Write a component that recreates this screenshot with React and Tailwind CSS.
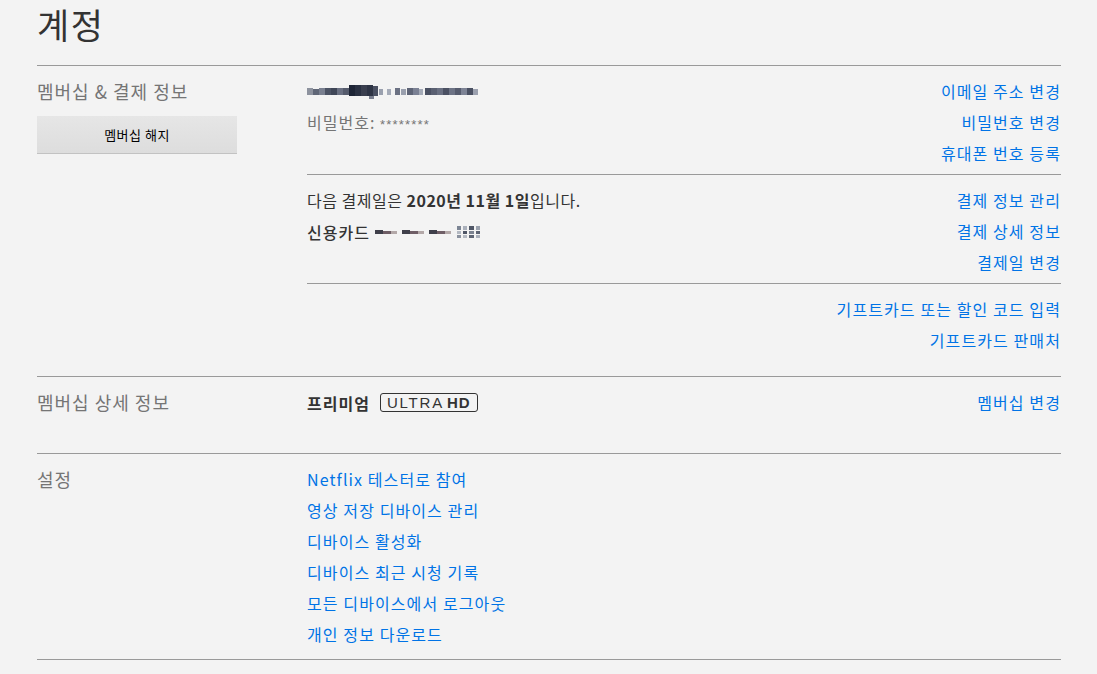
import React from "react";

const font = { fontFamily: "'Noto Sans CJK KR', 'Noto Sans', Arial, sans-serif" };

function Link({ children }) {
  return <div className="text-[16px] leading-[31px] text-[#0073e6] tracking-[1.1px]">{children}</div>;
}

function EmailBlur() {
  const blocks = [
    [0, 3, 6, 7, "#8d929e"], [6, 4, 6, 6, "#5f6676"], [12, 3, 6, 7, "#7a8090"], [18, 3, 6, 7, "#4c5364"],
    [24, 3, 6, 7, "#3f4657"], [30, 3, 6, 7, "#6a7082"], [36, 3, 6, 7, "#555b6c"], [42, 0, 6, 11, "#1e2536"],
    [48, 0, 6, 11, "#2a3142"], [54, 0, 6, 11, "#3a3f4f"], [60, 0, 6, 11, "#2e3445"], [66, 1, 5, 10, "#4a5062"],
    [62, 11, 5, 3, "#7b8090"], [72, 4, 4, 6, "#9aa0ae"], [80, 4, 4, 6, "#a5abb8"], [88, 3, 5, 7, "#6b7183"],
    [94, 4, 5, 6, "#9aa0ae"], [100, 3, 6, 7, "#5e6476"], [106, 3, 6, 7, "#7b8194"], [112, 4, 4, 6, "#a5abb8"],
    [118, 3, 6, 7, "#4b5163"], [124, 3, 6, 7, "#5a6072"], [130, 3, 6, 7, "#6a7082"], [136, 3, 6, 7, "#4b5163"],
    [142, 3, 6, 7, "#6d7385"], [148, 3, 6, 7, "#565c6e"], [154, 3, 6, 7, "#7d8395"], [160, 3, 6, 7, "#4a5062"],
    [166, 4, 5, 6, "#9ba0ae"],
  ];
  return (
    <svg width="172" height="14" viewBox="0 0 172 14" className="block">
      {blocks.map(([x, y, w, h, c], i) => (
        <rect key={i} x={x} y={y} width={w} height={h} fill={c} />
      ))}
    </svg>
  );
}

function CardBlur() {
  const blocks = [
    [0, 5, 8, 4, "#3f3f4a"], [8, 6, 8, 3, "#6f5e66"], [16, 6, 6, 3, "#b3a8a8"],
    [27, 5, 8, 4, "#3f3f4a"], [35, 6, 8, 3, "#6f5e66"], [43, 6, 6, 3, "#b3a8a8"],
    [54, 5, 8, 4, "#3f3f4a"], [62, 6, 8, 3, "#6f5e66"], [70, 6, 6, 3, "#b3a8a8"],
    [82, 1, 4, 4, "#7c8594"], [88, 1, 4, 4, "#aab0bb"], [94, 1, 5, 4, "#4f5666"], [101, 1, 4, 4, "#9aa1ad"],
    [82, 6, 4, 3, "#b4b9c2"], [88, 6, 4, 3, "#4f5666"], [94, 6, 5, 3, "#7b8290"], [101, 6, 4, 3, "#5d6473"],
    [82, 10, 4, 3, "#8b929f"], [88, 10, 4, 3, "#b4b9c2"], [94, 10, 5, 3, "#5d6473"], [101, 10, 4, 3, "#aab0bb"],
  ];
  return (
    <svg width="112" height="14" viewBox="0 0 112 14" className="block ml-[5px]">
      {blocks.map(([x, y, w, h, c], i) => (
        <rect key={i} x={x} y={y} width={w} height={h} fill={c} />
      ))}
    </svg>
  );
}

function SectionLabel({ children }) {
  return <div className="text-[18px] leading-[31px] text-[#757575] tracking-[1px]">{children}</div>;
}

export default function App() {
  return (
    <div className="min-h-[674px] bg-[#f3f3f3] text-[#333]" style={font}>
      <div className="mx-[37px] w-[1024px]">
        <h1 className="pt-[2px] text-[35px] leading-[44px] font-normal text-[#333] tracking-[1.5px] pb-[19px] border-b border-[#999]">
          계정
        </h1>

        {/* Section 1 */}
        <div className="flex border-b border-[#999] pt-[10px] pb-[20px]">
          <div className="w-[270px] shrink-0">
            <SectionLabel>멤버십 &amp; 결제 정보</SectionLabel>
            <button className="mt-[9px] w-[200px] h-[37px] bg-gradient-to-b from-[#e6e6e6] to-[#dddddd] shadow-[0_1px_0_rgba(0,0,0,0.2)] text-[13px] text-[#000] tracking-[0.5px]">
              멤버십 해지
            </button>
          </div>
          <div className="flex-1">
            <div className="flex justify-between border-b border-[#999] pb-[5px]">
              <div>
                <div className="h-[31px] flex items-center"><EmailBlur /></div>
                <div className="text-[16px] leading-[31px] text-[#757575] tracking-[1px]">
                  비밀번호:{" "}
                  <span className="text-[13px] tracking-[1.2px]" style={{ fontFamily: "'Liberation Sans', Arial, sans-serif" }}>
                    ********
                  </span>
                </div>
              </div>
              <div className="text-right">
                <Link>이메일 주소 변경</Link>
                <Link>비밀번호 변경</Link>
                <Link>휴대폰 번호 등록</Link>
              </div>
            </div>
            <div className="flex justify-between border-b border-[#999] pt-[10px] pb-[5px]">
              <div>
                <div className="text-[16px] leading-[31px] text-[#333] tracking-[0.5px]">
                  다음 결제일은 <span className="font-bold">2020년 11월 1일</span>입니다.
                </div>
                <div className="h-[31px] flex items-center text-[16px] font-medium text-[#333]">
                  <span className="tracking-[1px]">신용카드</span>
                  <CardBlur />
                </div>
              </div>
              <div className="text-right">
                <Link>결제 정보 관리</Link>
                <Link>결제 상세 정보</Link>
                <Link>결제일 변경</Link>
              </div>
            </div>
            <div className="flex justify-end pt-[10px]">
              <div className="text-right">
                <Link>기프트카드 또는 할인 코드 입력</Link>
                <Link>기프트카드 판매처</Link>
              </div>
            </div>
          </div>
        </div>

        {/* Section 2 */}
        <div className="flex border-b border-[#999] pt-[10px] h-[77px]">
          <div className="w-[270px] shrink-0">
            <SectionLabel>멤버십 상세 정보</SectionLabel>
          </div>
          <div className="flex-1 flex justify-between">
            <div className="h-[31px] flex items-center gap-[10px]">
              <span className="text-[16px] font-bold text-[#333] tracking-[1px]">프리미엄</span>
              <span
                className="inline-flex items-center h-[19px] px-[6px] border-[1.5px] border-[#333] rounded-[3px] text-[15px] leading-none text-[#333] tracking-[1.8px]"
                style={{ fontFamily: "'Liberation Sans', Arial, sans-serif" }}
              >
                ULTRA<span className="font-bold ml-[3px] tracking-[1px]">HD</span>
              </span>
            </div>
            <div className="text-right">
              <Link>멤버십 변경</Link>
            </div>
          </div>
        </div>

        {/* Section 3 */}
        <div className="flex border-b border-[#999] pt-[10px] pb-[9px]">
          <div className="w-[270px] shrink-0">
            <SectionLabel>설정</SectionLabel>
          </div>
          <div className="flex-1">
            <Link>Netflix 테스터로 참여</Link>
            <Link>영상 저장 디바이스 관리</Link>
            <Link>디바이스 활성화</Link>
            <Link>디바이스 최근 시청 기록</Link>
            <Link>모든 디바이스에서 로그아웃</Link>
            <Link>개인 정보 다운로드</Link>
          </div>
        </div>
      </div>
    </div>
  );
}
